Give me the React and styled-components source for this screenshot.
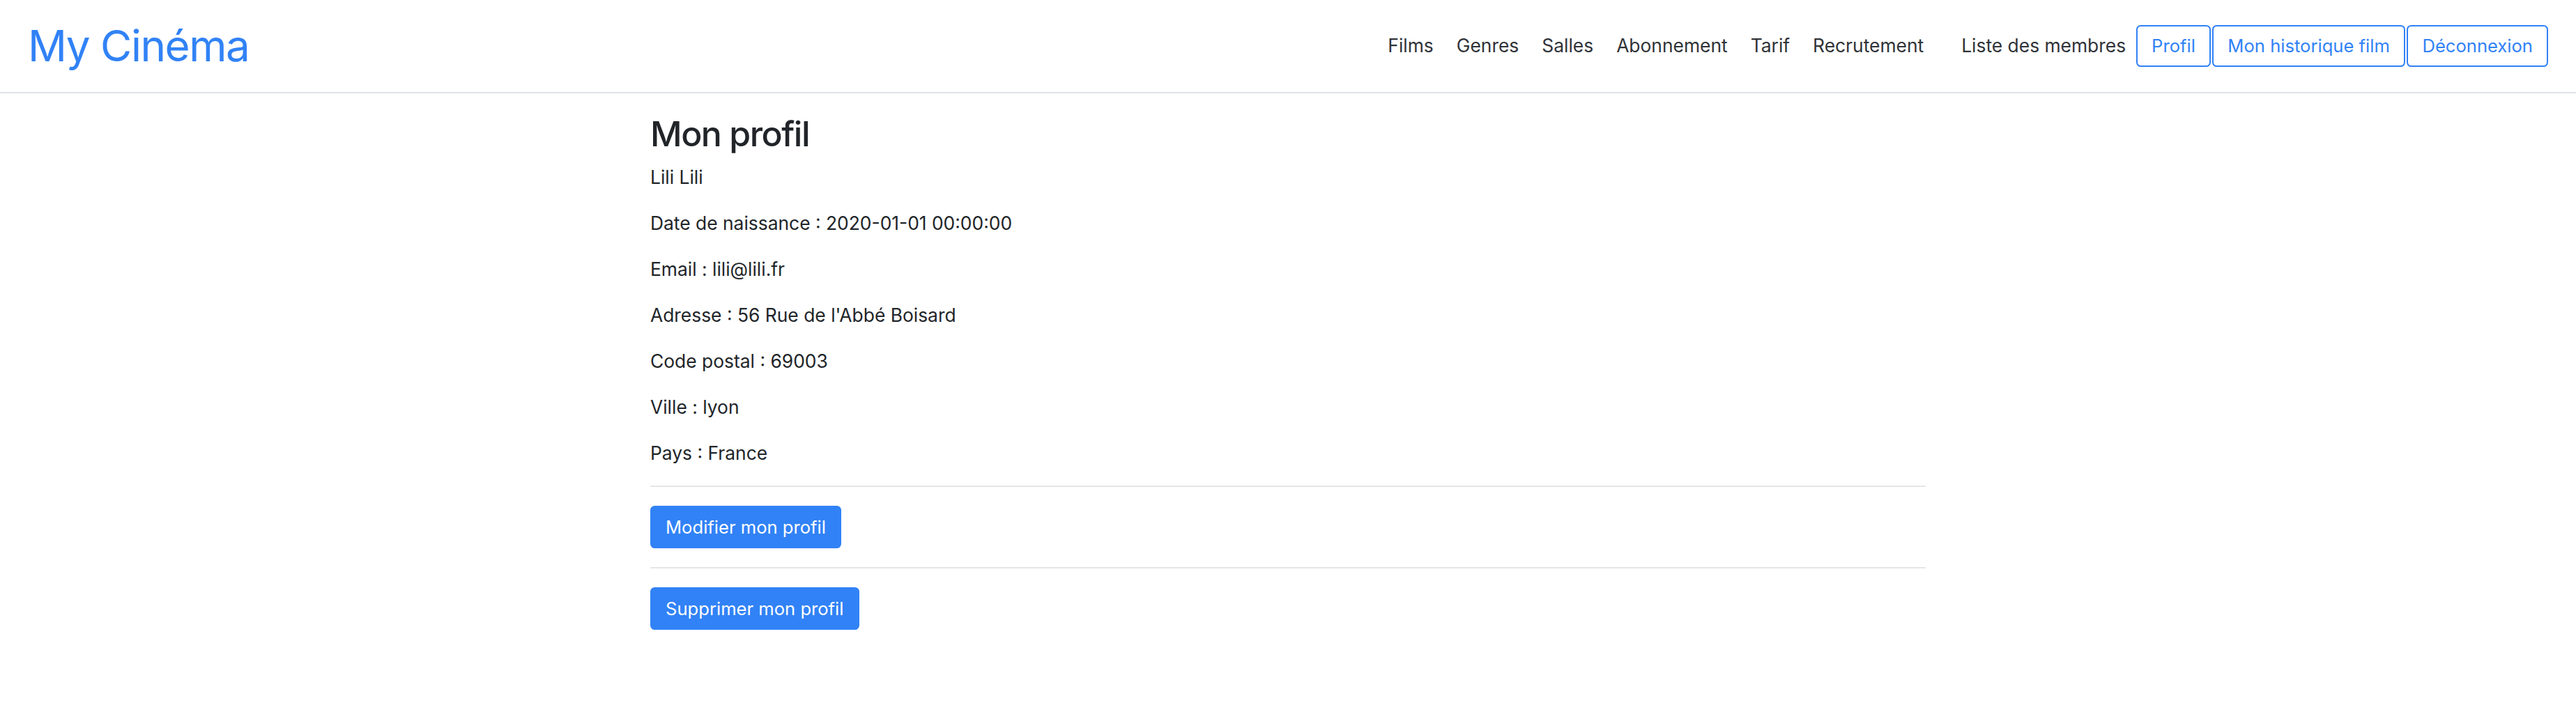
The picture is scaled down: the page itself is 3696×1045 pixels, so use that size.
import React from "react";
import styled, { createGlobalStyle } from "styled-components";

const GlobalStyle = createGlobalStyle`
  *, *::before, *::after { box-sizing: border-box; }
  html, body { margin: 0; padding: 0; background: #ffffff; }
  body {
    font-family: Inter, "Noto Sans", "Liberation Sans", sans-serif;
    font-size: 26.4px;
    line-height: 39.6px;
    color: #212529;
  }
`;

const BLUE = "#3182f6";

const NavBar = styled.nav`
  display: flex;
  align-items: center;
  justify-content: space-between;
  height: 134px;
  padding: 0 40px;
  border-bottom: 2px solid #dfe2e6;
`;

const Brand = styled.a`
  font-size: 62px;
  line-height: 1.2;
  letter-spacing: -1.5px;
  font-weight: 400;
  color: ${BLUE};
  text-decoration: none;
`;

const NavMenu = styled.div`
  display: flex;
  align-items: center;
`;

const NavGroup = styled.ul`
  display: flex;
  align-items: center;
  list-style: none;
  margin: 0;
  padding: 0;
  margin-left: ${(p) => p.$offset || 0}px;
`;

const NavLink = styled.a`
  display: block;
  padding: ${(p) => (p.$tight ? "0 15px 0 16.5px" : "0 16.5px")};
  color: #303338;
  text-decoration: none;
  white-space: nowrap;
`;

const OutlineButton = styled.button`
  font: inherit;
  font-size: 25.6px;
  height: 60px;
  padding: 0 20px;
  margin-left: ${(p) => (p.$first ? 0 : 2.5)}px;
  border: 2px solid ${BLUE};
  border-radius: 6.4px;
  background: transparent;
  color: ${BLUE};
  white-space: nowrap;
  cursor: pointer;
`;

const Main = styled.main`
  max-width: 1830px;
  margin: 0 auto;
  padding-top: 28px;
`;

const Title = styled.h3`
  margin: 0 0 12.8px;
  font-size: 50px;
  line-height: 60px;
  font-weight: 500;
  letter-spacing: -1.5px;
`;

const Field = styled.p`
  margin: 0 0 26.4px;
`;

const Divider = styled.hr`
  margin: 27px 0;
  border: 0;
  border-top: 2px solid #e6e6e6;
`;

const PrimaryButton = styled.button`
  font: inherit;
  font-size: 25.6px;
  height: 61px;
  padding: 0 20px;
  border: 2px solid ${BLUE};
  border-radius: 6.4px;
  background: ${BLUE};
  color: #ffffff;
  cursor: pointer;
`;

const ActionRow = styled.div`
  display: flex;
`;

const links = ["Films", "Genres", "Salles", "Abonnement", "Tarif", "Recrutement"];

const fields = [
  "Lili Lili",
  "Date de naissance : 2020-01-01 00:00:00",
  "Email : lili@lili.fr",
  "Adresse : 56 Rue de l'Abbé Boisard",
  "Code postal : 69003",
  "Ville : lyon",
  "Pays : France",
];

export default function App() {
  return (
    <>
      <GlobalStyle />
      <NavBar>
        <Brand href="#">My Cinéma</Brand>
        <NavMenu>
          <NavGroup>
            {links.map((l) => (
              <li key={l}>
                <NavLink href="#">{l}</NavLink>
              </li>
            ))}
          </NavGroup>
          <NavGroup $offset={21}>
            <li>
              <NavLink href="#" $tight>Liste des membres</NavLink>
            </li>
            <li>
              <OutlineButton $first>Profil</OutlineButton>
            </li>
            <li>
              <OutlineButton>Mon historique film</OutlineButton>
            </li>
            <li>
              <OutlineButton>Déconnexion</OutlineButton>
            </li>
          </NavGroup>
        </NavMenu>
      </NavBar>
      <Main>
        <Title>Mon profil</Title>
        {fields.map((f) => (
          <Field key={f}>{f}</Field>
        ))}
        <Divider />
        <ActionRow>
          <PrimaryButton>Modifier mon profil</PrimaryButton>
        </ActionRow>
        <Divider />
        <ActionRow>
          <PrimaryButton>Supprimer mon profil</PrimaryButton>
        </ActionRow>
      </Main>
    </>
  );
}
